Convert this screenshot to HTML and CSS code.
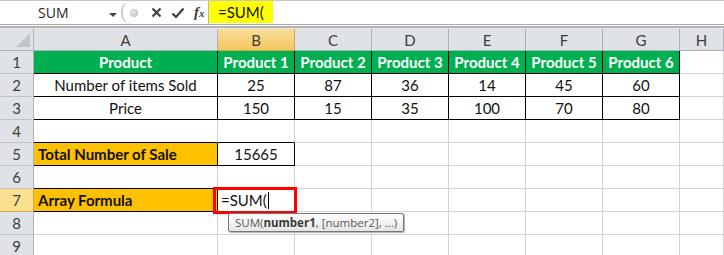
FILE: index.html
```html
<!doctype html>
<html>
<head>
  <meta charset="utf-8">
  <title>Array Formula</title>
  <link rel="stylesheet" href="styles.css">
</head>
<body>

<div class="fbar">
  <div class="namebox">
    <span class="name">SUM</span>
    <span class="drop"></span>
  </div>
  <div class="grip"><span class="dot"></span></div>
  <div class="tools">
    <svg class="ico" width="11" height="11" viewBox="0 0 11 11"><path d="M1.5 1.5L9.5 9.5M9.5 1.5L1.5 9.5" stroke="#3c3c3c" stroke-width="2"/></svg>
    <svg class="ico" width="14" height="12" viewBox="0 0 14 12"><path d="M1.5 6.5L5 10L12.5 1.5" stroke="#3c3c3c" stroke-width="2.2" fill="none"/></svg>
    <span class="fx">f<i>x</i></span>
  </div>
  <div class="formula"><span class="ftext">=SUM(</span></div>
</div>
<div class="fsep"></div>

<div class="sheet">
  <div class="corner"><span class="tri"></span></div>
  <div class="ch">A</div>
  <div class="ch sel">B</div>
  <div class="ch">C</div>
  <div class="ch">D</div>
  <div class="ch">E</div>
  <div class="ch">F</div>
  <div class="ch">G</div>
  <div class="ch">H</div>

  <div class="rh">1</div>
  <div class="c bk head">Product</div>
  <div class="c bk head">Product 1</div>
  <div class="c bk head">Product 2</div>
  <div class="c bk head">Product 3</div>
  <div class="c bk head">Product 4</div>
  <div class="c bk head">Product 5</div>
  <div class="c bk head">Product 6</div>
  <div class="c"></div>

  <div class="rh">2</div>
  <div class="c bk">Number of items Sold</div>
  <div class="c bk">25</div>
  <div class="c bk">87</div>
  <div class="c bk">36</div>
  <div class="c bk">14</div>
  <div class="c bk">45</div>
  <div class="c bk">60</div>
  <div class="c"></div>

  <div class="rh">3</div>
  <div class="c bk">Price</div>
  <div class="c bk">150</div>
  <div class="c bk">15</div>
  <div class="c bk">35</div>
  <div class="c bk">100</div>
  <div class="c bk">70</div>
  <div class="c bk">80</div>
  <div class="c"></div>

  <div class="rh">4</div>
  <div class="c bb"></div>
  <div class="c bb"></div>
  <div class="c"></div>
  <div class="c"></div>
  <div class="c"></div>
  <div class="c"></div>
  <div class="c"></div>
  <div class="c"></div>

  <div class="rh">5</div>
  <div class="c bk label">Total Number of Sale</div>
  <div class="c bk">15665</div>
  <div class="c"></div>
  <div class="c"></div>
  <div class="c"></div>
  <div class="c"></div>
  <div class="c"></div>
  <div class="c"></div>

  <div class="rh">6</div>
  <div class="c bb"></div>
  <div class="c"></div>
  <div class="c"></div>
  <div class="c"></div>
  <div class="c"></div>
  <div class="c"></div>
  <div class="c"></div>
  <div class="c"></div>

  <div class="rh sel">7</div>
  <div class="c bk label">Array Formula</div>
  <div class="c edit">=SUM(<span class="caret"></span></div>
  <div class="c"></div>
  <div class="c"></div>
  <div class="c"></div>
  <div class="c"></div>
  <div class="c"></div>
  <div class="c"></div>

  <div class="rh">8</div>
  <div class="c"></div>
  <div class="c"></div>
  <div class="c"></div>
  <div class="c"></div>
  <div class="c"></div>
  <div class="c"></div>
  <div class="c"></div>
  <div class="c"></div>

  <div class="rh">9</div>
  <div class="c"></div>
  <div class="c"></div>
  <div class="c"></div>
  <div class="c"></div>
  <div class="c"></div>
  <div class="c"></div>
  <div class="c"></div>
  <div class="c"></div>

  <div class="redbox"></div>
  <div class="tip">SUM(<b>number1</b>, [number2], ...)</div>
</div>

</body>
</html>
```

FILE: styles.css
```css
body {
  margin: 0;
  background-color: white;
  font-family: Lato, "Liberation Sans", sans-serif;
  overflow: hidden;
}

/* formula bar */

.fbar {
  display: flex;
  height: 23px;
  border-top: 1px solid #c8c8c8;
  background-color: white;
}

.namebox {
  width: 121px;
  display: flex;
  align-items: center;
  position: relative;
}

.name {
  font-family: "Open Sans", "Noto Sans", sans-serif;
  font-size: 14px;
  color: #1e1e1e;
  margin-left: 38px;
}

.drop {
  position: absolute;
  left: 109px;
  top: 12px;
  border-left: 4px solid transparent;
  border-right: 4px solid transparent;
  border-top: 4px solid #444;
}

.grip {
  width: 22px;
  border-left: 2px solid #c9c9c9;
  border-radius: 10px 0 0 10px;
  display: flex;
  align-items: center;
  padding-left: 7px;
  box-sizing: border-box;
}

.dot {
  width: 8px;
  height: 8px;
  border-radius: 50%;
  background: radial-gradient(circle at 40% 40%, #e8e8e8, #b4b4b4);
}

.tools {
  width: 65px;
  display: flex;
  align-items: center;
  gap: 9px;
  padding-left: 8px;
  box-sizing: border-box;
}

.fx {
  font-family: "Liberation Serif", serif;
  font-style: italic;
  font-weight: bold;
  font-size: 15px;
  color: #3c3c3c;
}

.fx i {
  font-size: 11px;
}

.formula {
  flex: 1;
  border-left: 1px solid #b8b8b8;
  display: flex;
}

.ftext {
  background-color: #ffff00;
  width: 64px;
  height: 22px;
  font-size: 15px;
  line-height: 22px;
  padding-left: 9px;
  box-sizing: border-box;
  color: #111;
}

.fsep {
  height: 1px;
  border-top: 1px solid #a9a9a9;
  border-bottom: 2px solid #b4b4b4;
  background-color: white;
  box-shadow: 0 1px 0 #e6e6e6;
}

/* sheet grid */

.sheet {
  position: relative;
  display: grid;
  grid-template-columns: 34px 184px repeat(6, 77px) 1fr;
  grid-template-rows: 22px repeat(9, 23px);
  margin-top: 1px;
  font-size: 15px;
  color: #111;
}

.corner {
  background-color: #dfe3e8;
  border-right: 1px solid #aeb3b9;
  border-bottom: 1px solid #aeb3b9;
  position: relative;
}

.tri {
  position: absolute;
  right: 3px;
  bottom: 3px;
  border-left: 14px solid transparent;
  border-bottom: 14px solid #c1c6cc;
}

.ch, .rh {
  background-color: #dfe3e8;
  color: #3d3d3d;
  font-size: 15px;
  display: flex;
  align-items: center;
  justify-content: center;
  box-sizing: border-box;
}

.ch {
  border-right: 1px solid #abb0b6;
  border-bottom: 1px solid #abb0b6;
}

.rh {
  border-right: 1px solid #abb0b6;
  border-bottom: 1px solid #c0c4c9;
}

.ch.sel {
  background: linear-gradient(#f8df9a, #f4c65f);
  border-color: #d7a24a;
}

.rh.sel {
  background: #fbe08f;
  border-color: #d7a24a;
}

.c {
  border-right: 1px solid #d4d4d4;
  border-bottom: 1px solid #d4d4d4;
  display: flex;
  align-items: center;
  justify-content: center;
  white-space: nowrap;
  box-sizing: border-box;
}

.bk {
  border-right-color: black;
  border-bottom-color: black;
}

.bb {
  border-bottom-color: black;
}

.head {
  background-color: #00b050;
  color: white;
  font-weight: bold;
}

.label {
  background-color: #ffc000;
  font-weight: bold;
  justify-content: flex-start;
  padding-left: 4px;
}

.edit {
  justify-content: flex-start;
  padding-left: 3px;
}

.caret {
  display: inline-block;
  width: 1px;
  height: 17px;
  background-color: black;
  margin-left: 1px;
}

.redbox {
  position: absolute;
  left: 213px;
  top: 158px;
  width: 84px;
  height: 27px;
  border: 3px solid #ff0000;
  box-sizing: border-box;
}

.tip {
  position: absolute;
  left: 228px;
  top: 184px;
  height: 19px;
  padding: 0 6px;
  border: 1px solid #767676;
  border-radius: 2px;
  background: linear-gradient(#ffffff, #e6e6e6);
  box-shadow: 1px 1px 1px #b0b0b0;
  font-family: "Open Sans", "Noto Sans", sans-serif;
  font-size: 11.5px;
  line-height: 18px;
  color: #575757;
  box-sizing: border-box;
}

.tip b {
  color: #3a3a3a;
}
```
